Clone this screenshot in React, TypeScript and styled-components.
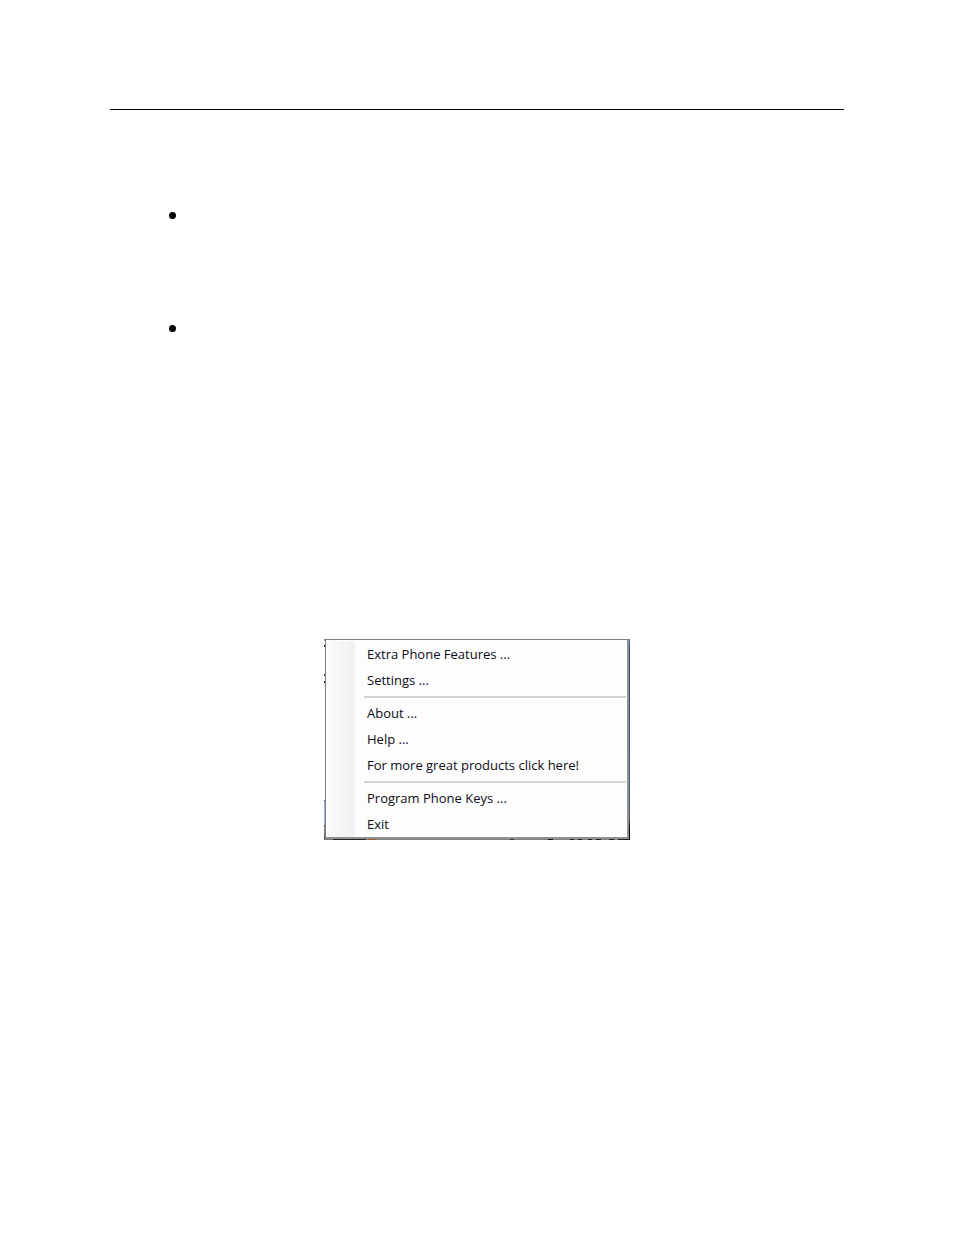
import styled, { createGlobalStyle } from "styled-components";

const GlobalStyle = createGlobalStyle`
  body {
    margin: 0;
    background: #ffffff;
    font-family: "Open Sans", "Noto Sans", sans-serif;
  }
`;

const Page = styled.main`
  padding: 109px 110px 0;
`;

const Rule = styled.hr`
  margin: 0;
  border: none;
  height: 1px;
  background: #000000;
`;

const Bullets = styled.ul`
  display: flex;
  flex-direction: column;
  gap: 106px;
  margin: 0;
  padding: 102px 0 0 59px;
  list-style: none;
`;

const Bullet = styled.li`
  width: 7px;
  height: 7px;
  border-radius: 50%;
  background: #000000;
`;

// The 1px padding is the strip of desktop that shows around the menu
const Backdrop = styled.div`
  width: 306px;
  box-sizing: border-box;
  margin: 307px auto 0;
  padding: 0 1px 1px;
  background:
    linear-gradient(#5577b0, #34465e 12px, #4a6078 150px, #555555 180px, #000000 190px) right / 1px 100% no-repeat,
    linear-gradient(
      90deg,
      #777777 9px, #222222 9px 42px, #777777 42px 44px, #a05820 44px 51px, #808080 51px 186px,
      #333333 186px 190px, #808080 190px 224px, #111111 224px 229px, #808080 229px 246px,
      #222222 246px 250px, #808080 250px 254px, #222222 254px 258px, #808080 258px 264px,
      #222222 264px 268px, #808080 268px 272px, #222222 272px 277px, #808080 277px 285px,
      #222222 285px 290px, #808080 290px 294px, #222222 294px
    ) bottom / 100% 1px no-repeat,
    linear-gradient(
      #d08030 2px, #ffffff 2px 6px, #222222 6px 8px, #ffffff 8px 35px, #333333 35px 37px,
      #ffffff 37px 42px, #333333 42px 44px, #ffffff 44px 161px, #445566 161px 162px,
      #8ab8ee 162px 186px, #445566 186px 188px, #999999 188px, #444444
    ) left / 1px 100% no-repeat;
`;

const Menu = styled.nav`
  display: flex;
  padding-top: 1px;
  border: solid #808080;
  border-width: 1px 2px 2px 1px;
  border-right-color: #8c9298;
  border-bottom-color: #909090;
  background: #fdfdfd;
`;

const Gutter = styled.div`
  width: 29px;
  background: linear-gradient(90deg, #fcfcfc, #f0f0f0);
`;

const Items = styled.div`
  flex: 1;
  padding-left: 9px;
`;

const Item = styled.button`
  display: block;
  width: 100%;
  height: 26px;
  padding: 0 3px;
  border: none;
  background: none;
  color: #0c0c18;
  font-family: inherit;
  font-size: 13px;
  line-height: 26px;
  text-align: left;
  cursor: pointer;
`;

const Separator = styled.hr`
  height: 2px;
  margin: 3px 1px 2px 0;
  border: none;
  background: #d2d2d2;
`;

const groups = [
  ["Extra Phone Features ...", "Settings ..."],
  ["About ...", "Help ...", "For more great products click here!"],
  ["Program Phone Keys ...", "Exit"],
];

const App = (): JSX.Element => {
  return (
    <>
      <GlobalStyle />
      <Page>
        <Rule />
        <Bullets>
          <Bullet />
          <Bullet />
        </Bullets>
        <Backdrop>
          <Menu>
            <Gutter />
            <Items>
              {groups.map((items, i) => (
                <div key={i}>
                  {i > 0 && <Separator />}
                  {items.map((text) => (
                    <Item key={text} type="button">
                      {text}
                    </Item>
                  ))}
                </div>
              ))}
            </Items>
          </Menu>
        </Backdrop>
      </Page>
    </>
  );
};

export default App;
